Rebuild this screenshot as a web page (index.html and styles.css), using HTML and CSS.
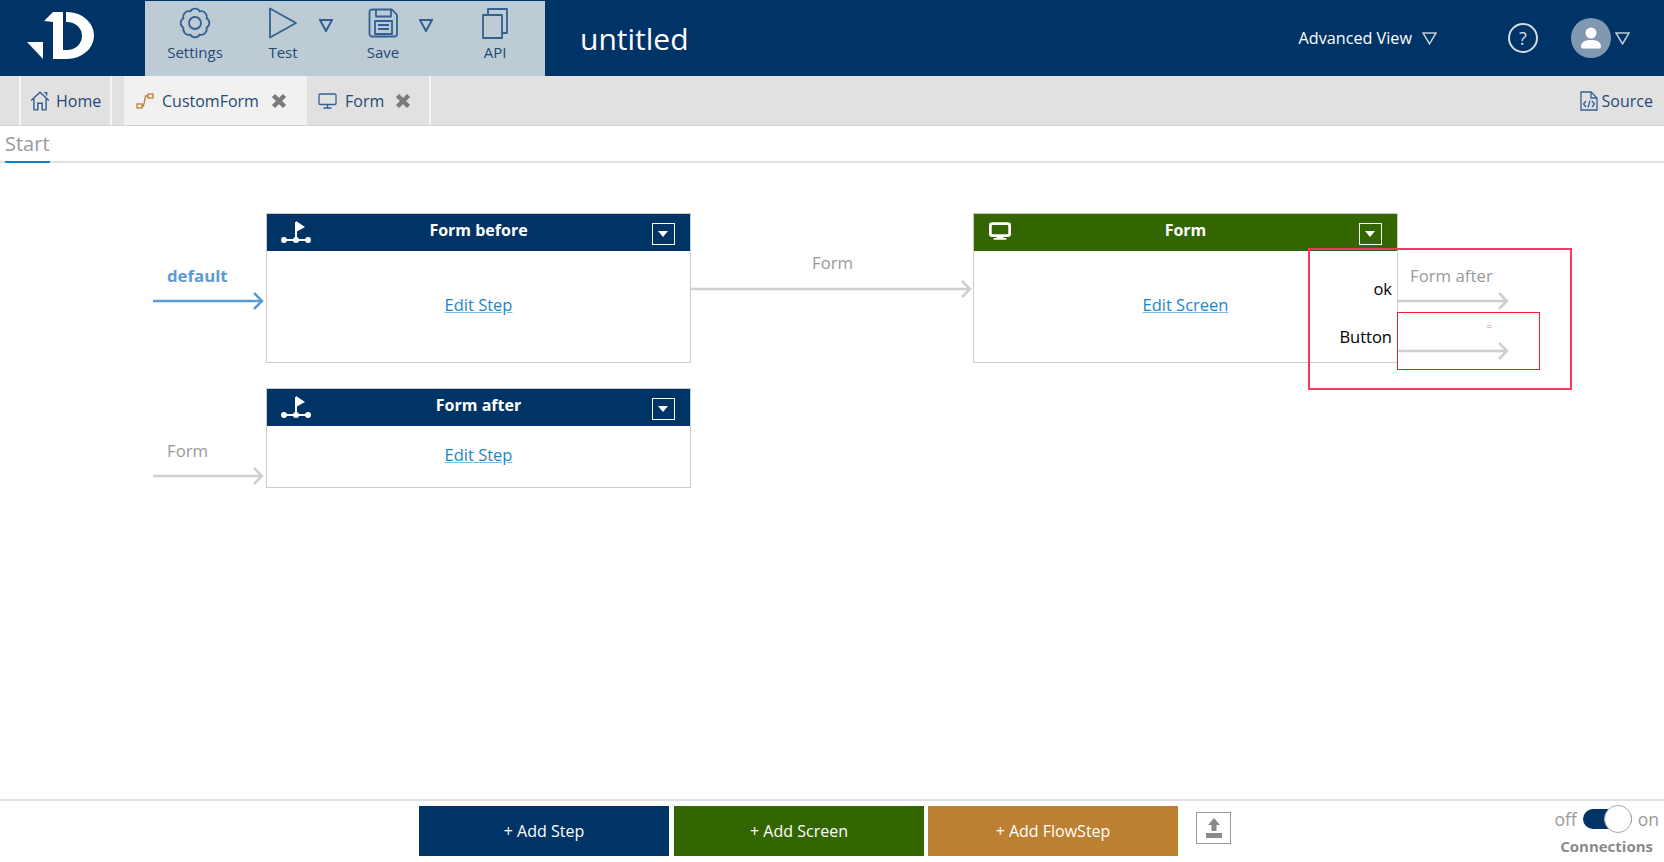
FILE: index.html
```html
<!DOCTYPE html>
<html lang="en">
<head>
<meta charset="utf-8">
<title>untitled</title>
<link rel="stylesheet" href="styles.css">
</head>
<body>
<header class="topbar">
  <div class="logo">
    <svg width="145" height="76" viewBox="0 0 145 76"><path class="logo-fill" d="M27 42H43V59Z"/><path class="logo-fill" d="M44 21L53 12H63V59H53V22Z"/><path class="logo-fill" d="M66 12H67A27 23.5 0 0 1 67 59H63V50H67A15 14 0 0 0 67 22H66Z"/></svg>
  </div>
  <nav class="tools">
    <div class="tool tool-settings">
      <svg class="tool-icon" width="32" height="32" viewBox="0 0 32 32"><path d="M27.55 20.78A5.5 5.5 0 0 1 20.78 27.55A5.5 5.5 0 0 1 11.22 27.55A5.5 5.5 0 0 1 4.45 20.78A5.5 5.5 0 0 1 4.45 11.22A5.5 5.5 0 0 1 11.22 4.45A5.5 5.5 0 0 1 20.78 4.45A5.5 5.5 0 0 1 27.55 11.22A5.5 5.5 0 0 1 27.55 20.78Z"/><circle cx="16" cy="16" r="6"/></svg>
      <span>Settings</span>
    </div>
    <div class="tool tool-test">
      <svg class="tool-icon" width="32" height="32" viewBox="0 0 32 32"><path d="M3 1.5L29 16L3 30.5Z"/></svg>
      <span>Test</span>
    </div>
    <svg class="caret caret-test" width="14" height="13" viewBox="0 0 14 13"><path d="M1 1H13L7 12Z"/></svg>
    <div class="tool tool-save">
      <svg class="tool-icon" width="32" height="32" viewBox="0 0 32 32"><path d="M5 2.500H25L30 8V27A2.500 2.500 0 0 1 27.500 29.500H5A2.500 2.500 0 0 1 2.500 27V5A2.500 2.500 0 0 1 5 2.500Z"/><path d="M9 2.500V9.500H24V2.500"/><rect x="8" y="14" width="17" height="13"/><path d="M11 18H22M11 22H22"/></svg>
      <span>Save</span>
    </div>
    <svg class="caret caret-save" width="14" height="13" viewBox="0 0 14 13"><path d="M1 1H13L7 12Z"/></svg>
    <div class="tool tool-api">
      <svg class="tool-icon" width="32" height="32" viewBox="0 0 32 32"><rect x="4" y="8" width="19" height="23"/><path d="M9 8V2H28V26H23"/></svg>
      <span>API</span>
    </div>
  </nav>
  <h1 class="doc-title">untitled</h1>
  <div class="account">
    <span class="view-label">Advanced View</span>
    <svg class="hollow-caret caret-view" width="15" height="13" viewBox="0 0 15 13"><path d="M1 1H14L7.500 12Z"/></svg>
    <span class="help">?</span>
    <span class="avatar"><svg width="26" height="26" viewBox="0 0 26 26"><circle cx="13" cy="8" r="5.500"/><path d="M3 22C3 16 8 15 13 15S23 16 23 22Q23 23.500 21 23.500H5Q3 23.500 3 22Z"/></svg></span>
    <svg class="hollow-caret caret-user" width="15" height="13" viewBox="0 0 15 13"><path d="M1 1H14L7.500 12Z"/></svg>
  </div>
</header>

<div class="tabbar">
  <div class="tab tab-home">
    <svg class="tab-icon" width="20" height="21" viewBox="0 0 18 19"><path d="M1 9.500L9 2L17 9.500M3.500 8V18H7V12H11V18H14.500V8M13 2.500H15V5"/></svg>
    <span>Home</span>
  </div>
  <div class="tab tab-flow">
    <svg class="tab-icon flow-icon" width="18" height="18" viewBox="0 0 18 18"><rect x="1" y="12" width="5" height="4"/><rect x="12" y="2" width="5" height="4"/><path d="M6 14H7.500L9.500 4H12"/></svg>
    <span>CustomForm</span>
    <svg class="close" width="16" height="16" viewBox="0 0 16 16"><path d="M2.500 2.500L13.500 13.500M13.500 2.500L2.500 13.500"/></svg>
  </div>
  <div class="tab tab-form">
    <svg class="tab-icon" width="19" height="16" viewBox="0 0 19 16"><rect x="1" y="1" width="17" height="10.500" rx="1"/><path d="M9.500 11.500V15M5.500 15H13.500"/></svg>
    <span>Form</span>
    <svg class="close" width="16" height="16" viewBox="0 0 16 16"><path d="M2.500 2.500L13.500 13.500M13.500 2.500L2.500 13.500"/></svg>
  </div>
  <div class="tab tab-source">
    <svg class="tab-icon" width="18" height="20" viewBox="0 0 18 20"><path d="M1 1H11L17 7V19H1ZM11 1V7H17"/><path d="M6 10L3.500 13L6 16M12 10L14.500 13L12 16M10 9.500L8 16.500"/></svg>
    <span>Source</span>
  </div>
</div>

<div class="subtabs"><span class="subtab">Start</span></div>

<main class="canvas">
  <svg class="wires" width="1664" height="636" viewBox="0 0 1664 636">
    <path class="wire wire-blue" d="M153 138H262M254 130L262 138L254 146"/>
    <path class="wire" d="M691 126H970M962 118L970 126L962 134"/>
    <path class="wire" d="M153 313H262M254 305L262 313L254 321"/>
    <path class="wire" d="M1398 138H1507M1499 130L1507 138L1499 146"/>
    <path class="wire" d="M1398 188H1507M1499 180L1507 188L1499 196"/>
  </svg>

  <span class="wire-label label-default">default</span>
  <span class="wire-label label-in">Form</span>
  <span class="wire-label label-mid">Form</span>
  <span class="wire-label label-out">Form after</span>

  <article class="node node-before">
    <div class="node-head">
      <svg class="node-icon" width="30" height="24" viewBox="0 0 30 24"><path d="M15 0L24 6L15 11Z"/><path class="flag-line" d="M15 1V19M3 19H27"/><circle cx="3" cy="19" r="3"/><circle cx="15" cy="19" r="3"/><circle cx="27" cy="19" r="3"/></svg>
      <span class="node-title">Form before</span>
      <span class="node-menu"></span>
    </div>
    <div class="node-body"><a class="node-link">Edit Step</a></div>
  </article>

  <article class="node node-after">
    <div class="node-head">
      <svg class="node-icon" width="30" height="24" viewBox="0 0 30 24"><path d="M15 0L24 6L15 11Z"/><path class="flag-line" d="M15 1V19M3 19H27"/><circle cx="3" cy="19" r="3"/><circle cx="15" cy="19" r="3"/><circle cx="27" cy="19" r="3"/></svg>
      <span class="node-title">Form after</span>
      <span class="node-menu"></span>
    </div>
    <div class="node-body"><a class="node-link">Edit Step</a></div>
  </article>

  <article class="node node-form">
    <div class="node-head head-green">
      <svg class="node-icon" width="22" height="19" viewBox="0 0 24 20"><rect x="1.500" y="1.500" width="21" height="13" rx="2" class="screen"/><path d="M8 15H16V17H19V19H5V17H8Z"/></svg>
      <span class="node-title">Form</span>
      <span class="node-menu"></span>
    </div>
    <div class="node-body"><a class="node-link">Edit Screen</a></div>
  </article>

  <span class="out-label out-ok">ok</span>
  <span class="out-label out-button">Button</span>
  <span class="mark mark-pink"></span>
  <span class="mark mark-red"></span>
  <span class="tiny">=</span>
</main>

<footer class="footer">
  <div class="actions">
    <button class="add add-step">+ Add Step</button>
    <button class="add add-screen">+ Add Screen</button>
    <button class="add add-flow">+ Add FlowStep</button>
    <span class="upload"><svg width="20" height="22" viewBox="0 0 20 22"><path d="M10 1L16 8H12.500V14H7.500V8H4Z"/><path d="M2 16H18V21H2Z"/></svg></span>
  </div>
  <div class="connections">
    <div class="switch-row">
      <span>off</span>
      <span class="switch"><span class="knob"></span></span>
      <span>on</span>
    </div>
    <strong>Connections</strong>
  </div>
</footer>
</body>
</html>
```
FILE: styles.css
```css
* { box-sizing: border-box; }
html, body { height: 100%; }
body {
  margin: 0;
  display: flex;
  flex-direction: column;
  font-family: "Open Sans", sans-serif;
  background: #fff;
  color: #003366;
  overflow: hidden;
}

/* top bar */
.topbar {
  height: 76px;
  flex: none;
  display: flex;
  background: #003366;
}
.logo { width: 145px; flex: none; }
.logo-fill { fill: #fff; }
.tools {
  width: 400px;
  flex: none;
  margin-top: 1px;
  background: #bdcbd5;
  display: flex;
}
.tool {
  display: flex;
  flex-direction: column;
  align-items: center;
  flex: none;
  padding-top: 6px;
  font-size: 15px;
  line-height: 20px;
  color: #1f4a75;
}
.tool span { margin-top: 3px; }
.tool-settings { width: 100px; }
.tool-test { width: 76px; }
.tool-save { width: 72px; margin-left: 14px; }
.tool-api { width: 100px; margin-left: 12px; }
.tool-icon { fill: none; stroke: #336091; stroke-width: 1.800; stroke-linejoin: round; }
.caret { flex: none; margin-top: 18px; fill: none; stroke: #336091; stroke-width: 2; }
.caret-test { margin-left: -2px; }
.doc-title {
  margin: 0 0 0 35px;
  font-size: 30px;
  font-weight: 400;
  line-height: 78px;
  color: #fff;
}
.account {
  margin-left: auto;
  display: flex;
  align-items: center;
  padding-right: 34px;
  color: #fff;
}
.view-label { font-size: 16.200px; }
.hollow-caret { fill: none; stroke: #bdcbd5; stroke-width: 1.500; flex: none; }
.caret-view { margin-left: 10px; }
.help {
  width: 30px;
  height: 30px;
  margin-left: 71px;
  border: 2px solid #d5dde4;
  border-radius: 50%;
  display: flex;
  align-items: center;
  justify-content: center;
  font-size: 18px;
  color: #d5dde4;
}
.avatar {
  width: 40px;
  height: 40px;
  margin-left: 33px;
  border-radius: 50%;
  background: #8098b0;
  display: flex;
  align-items: center;
  justify-content: center;
}
.avatar svg { fill: #fff; }
.caret-user { margin-left: 4px; }

/* tabs */
.tabbar {
  height: 50px;
  flex: none;
  display: flex;
  padding-left: 19px;
  background: #e1e1e1;
  border-bottom: 1px solid #d4d4d4;
  font-size: 16px;
  color: #1f4a75;
}
.tab { display: flex; align-items: center; }
.tab-icon { flex: none; fill: none; stroke: #336091; stroke-width: 1.300; }
.tab-home {
  width: 93px;
  padding-left: 9px;
  gap: 6px;
  border-left: 2px solid #f5f5f5;
  border-right: 2px solid #f5f5f5;
}
.tab-flow {
  width: 183px;
  margin-left: 12px;
  padding-left: 12px;
  gap: 8px;
  background: #f1f1f1;
}
.flow-icon { stroke: #b9812f; }
.tab-flow .close { margin-left: 4px; }
.tab-form {
  width: 124px;
  padding-left: 11px;
  gap: 8px;
  border-right: 2px solid #f5f5f5;
}
.tab-form .close { margin-left: 3px; }
.close { flex: none; fill: none; stroke: #7b7b7b; stroke-width: 4.500; }
.tab-source { margin-left: auto; padding-right: 11px; gap: 4px; }

.subtabs {
  height: 37px;
  flex: none;
  padding-left: 5px;
  border-bottom: 2px solid #e1e1e1;
}
.subtab {
  display: inline-block;
  height: 37px;
  font-size: 20px;
  line-height: 36px;
  color: #9a9a9a;
  border-bottom: 2px solid #0a84cc;
}

/* diagram */
.canvas { position: relative; flex: 1; }
.wires { position: absolute; left: 0; top: 0; fill: none; }
.wire { stroke: #cfcfcf; stroke-width: 2.500; }
.wire-blue { stroke: #5b9bd5; }
.wire-label {
  position: absolute;
  font-size: 16.800px;
  line-height: 22px;
  color: #9a9a9a;
}
.label-default { left: 167px; top: 102px; font-weight: 700; color: #5b9bd5; }
.label-in { left: 167px; top: 277px; }
.label-mid { left: 812px; top: 89px; }
.label-out { left: 1410px; top: 102px; }

.node {
  position: absolute;
  width: 425px;
  display: flex;
  flex-direction: column;
  border: 1px solid #cccccc;
  background: #fff;
}
.node-before { left: 266px; top: 50px; height: 150px; }
.node-after { left: 266px; top: 225px; height: 100px; }
.node-form { left: 973px; top: 50px; height: 150px; }
.node-head {
  position: relative;
  height: 37px;
  flex: none;
  display: flex;
  justify-content: center;
  background: #003366;
  color: #fff;
  font-size: 16px;
  font-weight: 700;
  line-height: 32px;
}
.head-green { background: #336600; }
.node-icon { position: absolute; left: 14px; top: 7px; fill: #fff; }
.head-green .node-icon { left: 15px; top: 8px; }
.flag-line { fill: none; stroke: #fff; stroke-width: 2; }
.screen { fill: #336600; stroke: #fff; stroke-width: 3; }
.node-menu {
  position: absolute;
  right: 15px;
  top: 9px;
  width: 23px;
  height: 22px;
  border: 1px solid #fff;
}
.node-menu::after {
  content: "";
  position: absolute;
  left: 5px;
  top: 7px;
  border-left: 5.500px solid transparent;
  border-right: 5.500px solid transparent;
  border-top: 6px solid #fff;
}
.node-body {
  flex: 1;
  display: flex;
  align-items: center;
  justify-content: center;
}
.node-link {
  font-size: 16.500px;
  color: #1a86c8;
  text-decoration: underline;
  text-decoration-color: #7fbde4;
}
.node-before .node-body, .node-form .node-body { padding-bottom: 5px; }
.node-after .node-body { padding-bottom: 5px; }

.out-label {
  position: absolute;
  right: 272px;
  font-size: 16.500px;
  line-height: 22px;
  color: #000;
}
.out-ok { top: 115px; }
.out-button { top: 163px; }
.mark { position: absolute; }
.mark-pink {
  left: 1308px;
  top: 85px;
  width: 264px;
  height: 142px;
  border: 2px solid #ff3366;
}
.mark-red {
  left: 1397px;
  top: 149px;
  width: 143px;
  height: 58px;
  border: 1px solid #f02030;
}
.tiny {
  position: absolute;
  left: 1486px;
  top: 158px;
  font-size: 11px;
  line-height: 10px;
  color: #ff8099;
}

/* footer */
.footer {
  height: 63px;
  flex: none;
  position: relative;
  display: flex;
  justify-content: space-between;
  border-top: 2px solid #e1e1e1;
}
.actions {
  display: flex;
  align-items: flex-start;
  padding: 5px 0 0 419px;
}
.add {
  width: 250px;
  height: 50px;
  margin: 0 5px 0 0;
  padding: 0;
  border: 0;
  font: 16px "Open Sans", sans-serif;
  color: #fff;
}
.add-step { background: #003366; }
.add-screen { background: #336600; margin-right: 4px; }
.add-flow { background: #bd7f31; }
.upload {
  width: 35px;
  height: 32px;
  margin: 6px 0 0 13px;
  border: 1px solid #999;
  display: flex;
  align-items: center;
  justify-content: center;
}
.upload svg { fill: #8a8a8a; }
.connections {
  width: 120px;
  padding: 5px 5px 0 0;
  display: flex;
  flex-direction: column;
  align-items: flex-end;
  color: #8a8a8a;
}
.switch-row {
  display: flex;
  align-items: center;
  gap: 6px;
  font-size: 17.500px;
  line-height: 26px;
  color: #9a9a9a;
}
.switch {
  position: relative;
  width: 49px;
  height: 20px;
  border-radius: 10px;
  background: #003366;
}
.knob {
  position: absolute;
  right: 0;
  top: -4px;
  width: 28px;
  height: 28px;
  border-radius: 50%;
  background: #fff;
  border: 1px solid #aaa;
}
.connections strong { font-size: 15px; line-height: 20px; margin-right: 6px; margin-top: 4px; }
```
